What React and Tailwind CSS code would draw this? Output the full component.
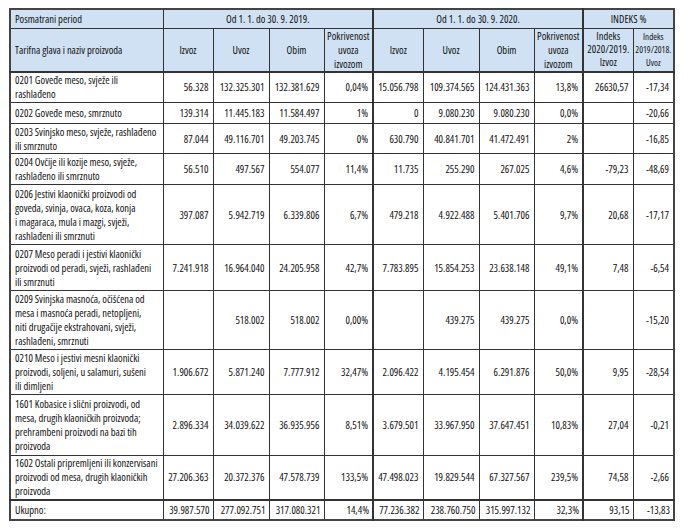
const rows = [
  {
    h: 'h-[31px]',
    name: ['0201 Goveđe meso, svježe ili', 'rashlađeno'],
    v: ['56.328', '132.325.301', '132.381.629', '0,04%', '15.056.798', '109.374.565', '124.431.363', '13,8%', '26630,57', '-17,34'],
  },
  {
    h: 'h-[21px]',
    name: ['0202 Goveđe meso, smrznuto'],
    v: ['139.314', '11.445.183', '11.584.497', '1%', '0', '9.080.230', '9.080.230', '0,0%', '', '-20,66'],
  },
  {
    h: 'h-[30px]',
    name: ['0203 Svinjsko meso, svježe, rashlađeno', 'ili smrznuto'],
    v: ['87.044', '49.116.701', '49.203.745', '0%', '630.790', '40.841.701', '41.472.491', '2%', '', '-16,85'],
  },
  {
    h: 'h-[31px]',
    name: ['0204 Ovčije ili kozije meso, svježe,', 'rashlađeno ili smrznuto'],
    v: ['56.510', '497.567', '554.077', '11,4%', '11.735', '255.290', '267.025', '4,6%', '-79,23', '-48,69'],
  },
  {
    h: 'h-[60px]',
    name: ['0206 Jestivi klaonički proizvodi od', 'goveda, svinja, ovaca, koza, konja', 'i magaraca, mula i mazgi, svježi,', 'rashlađeni ili smrznuti'],
    v: ['397.087', '5.942.719', '6.339.806', '6,7%', '479.218', '4.922.488', '5.401.706', '9,7%', '20,68', '-17,17'],
  },
  {
    h: 'h-[46px]',
    name: ['0207 Meso peradi i jestivi klaonički', 'proizvodi od peradi, svježi, rashlađeni', 'ili smrznuti'],
    v: ['7.241.918', '16.964.040', '24.205.958', '42,7%', '7.783.895', '15.854.253', '23.638.148', '49,1%', '7,48', '-6,54'],
  },
  {
    h: 'h-[59px]',
    name: ['0209 Svinjska masnoća, očišćena od', 'mesa i masnoća peradi, netopljeni,', 'niti drugačije ekstrahovani, svježi,', 'rashlađeni, smrznuti'],
    v: ['', '518.002', '518.002', '0,00%', '', '439.275', '439.275', '0,0%', '', '-15,20'],
  },
  {
    h: 'h-[45px]',
    name: ['0210 Meso i jestivi mesni klaonički', 'proizvodi, soljeni, u salamuri, sušeni', 'ili dimljeni'],
    v: ['1.906.672', '5.871.240', '7.777.912', '32,47%', '2.096.422', '4.195.454', '6.291.876', '50,0%', '9,95', '-28,54'],
  },
  {
    h: 'h-[61px]',
    name: ['1601 Kobasice i slični proizvodi, od', 'mesa, drugih klaoničkih proizvoda;', 'prehrambeni proizvodi na bazi tih', 'proizvoda'],
    v: ['2.896.334', '34.039.622', '36.935.956', '8,51%', '3.679.501', '33.967.950', '37.647.451', '10,83%', '27,04', '-0,21'],
  },
  {
    h: 'h-[44px]',
    name: ['1602 Ostali pripremljeni ili konzervisani', 'proizvodi od mesa, drugih klaoničkih', 'proizvoda'],
    v: ['27.206.363', '20.372.376', '47.578.739', '133,5%', '47.498.023', '19.829.544', '67.327.567', '239,5%', '74,58', '-2,66'],
  },
]

const total = ['39.987.570', '277.092.751', '317.080.321', '14,4%', '77.236.382', '238.760.750', '315.997.132', '32,3%', '93,15', '-13,83']

// thick dividers before the 2020 block and the index block
const thick = (i) => (i === 4 || i === 8 ? 'border-l-2' : '')

export default function App() {
  return (
    <div className="pl-[9px] pt-[8px] bg-white min-h-[531px]">
      <table
        className="w-[664px] table-fixed border-collapse border-2 border-[#444] text-[10.5px] leading-[14px] text-[#111] [font-stretch:75%]"
        style={{ fontFamily: '"Open Sans", sans-serif' }}
      >
        <colgroup>
          <col className="w-[153px]" />
          <col className="w-[50px]" />
          <col className="w-[56px]" />
          <col className="w-[55px]" />
          <col className="w-[49px]" />
          <col className="w-[50px]" />
          <col className="w-[56px]" />
          <col className="w-[55px]" />
          <col className="w-[49px]" />
          <col className="w-[50px]" />
          <col className="w-[41px]" />
        </colgroup>
        <thead className="bg-[#cfe1f3]">
          <tr className="h-[19px]">
            <td className="border border-[#333] px-[4px] text-left">Posmatrani period</td>
            <td colSpan={4} className="border border-[#333] text-center">Od 1. 1. do 30. 9. 2019.</td>
            <td colSpan={4} className="border border-[#333] border-l-2 text-center">Od 1. 1. do 30. 9. 2020.</td>
            <td colSpan={2} className="border border-[#333] border-l-2 text-center">INDEKS %</td>
          </tr>
          <tr className="h-[43px] border-b-2 border-[#333]">
            <td className="border border-[#333] px-[4px] text-left align-middle">Tarifna glava i naziv proizvoda</td>
            {['Izvoz', 'Uvoz', 'Obim'].map((t) => (
              <td key={t} className="border border-[#333] text-center">{t}</td>
            ))}
            <td className="border border-[#333] text-center">Pokrivenost<br />uvoza<br />izvozom</td>
            {['Izvoz', 'Uvoz', 'Obim'].map((t, i) => (
              <td key={t} className={`border border-[#333] text-center ${i === 0 ? 'border-l-2' : ''}`}>{t}</td>
            ))}
            <td className="border border-[#333] text-center">Pokrivenost<br />uvoza<br />izvozom</td>
            <td className="border border-[#333] border-l-2 text-center leading-[13px]">Indeks<br />2020/2019.<br />Izvoz</td>
            <td className="border border-[#333] text-center text-[9px] leading-[13px]">Indeks<br />2019/2018.<br />Uvoz</td>
          </tr>
        </thead>
        <tbody>
          {rows.map((r) => (
            <tr key={r.name[0]} className={r.h}>
              <td className="border border-[#333] px-[4px] align-middle">
                {r.name.map((l) => (
                  <div key={l} className="whitespace-nowrap">{l}</div>
                ))}
              </td>
              {r.v.map((x, i) => (
                <td key={i} className={`border border-[#333] pr-[4px] text-right whitespace-nowrap ${thick(i)}`}>{x}</td>
              ))}
            </tr>
          ))}
          <tr className="h-[20px] border-t-2 border-[#333]">
            <td className="border border-[#333] px-[4px]">Ukupno:</td>
            {total.map((x, i) => (
              <td key={i} className={`border border-[#333] pr-[3px] text-right whitespace-nowrap ${thick(i)}`}>{x}</td>
            ))}
          </tr>
        </tbody>
      </table>
    </div>
  )
}
